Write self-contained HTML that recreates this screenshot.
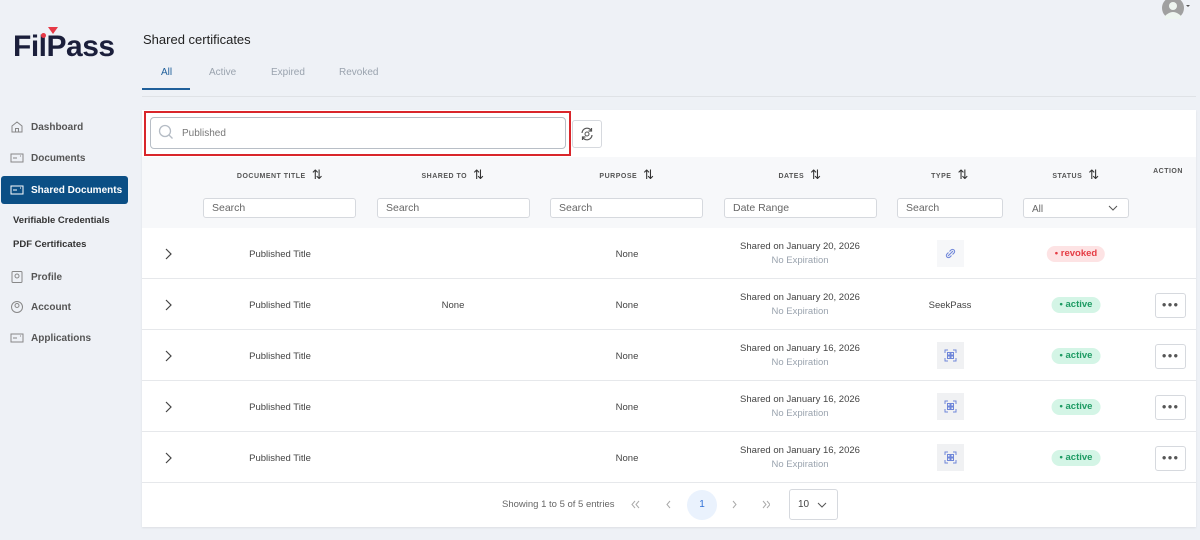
<!DOCTYPE html>
<html><head><meta charset="utf-8"><style>
*{box-sizing:border-box;margin:0;padding:0}
body{width:1200px;height:540px;background:#eef1f6;font-family:"Liberation Sans",sans-serif;position:relative;overflow:hidden;color:#333}
.abs{position:absolute}
.logo{left:13px;top:30px;font-size:30px;font-weight:bold;color:#1b1f3b;letter-spacing:-0.5px}
.nav{left:10px;font-size:10px;font-weight:bold;color:#555;display:flex;align-items:center;gap:7px}
.nav svg{width:14px;height:14px}
.active{left:1px;top:176px;width:127px;height:28px;background:#0b4f85;border-radius:3px;color:#fff}
.sub{left:13px;font-size:9.5px;font-weight:bold;color:#333}
.tabs span{position:absolute;top:67px;font-size:10px;color:#9aa3ae}
.card{left:142px;top:110px;width:1054px;height:417px;background:#fff;box-shadow:0 1px 2px rgba(0,0,0,.08)}
.hdr{left:142px;top:157px;width:1054px;height:71px;background:#f7f8fa}
.th{top:166px;font-size:7px;font-weight:bold;color:#555;letter-spacing:.5px;transform:translateX(-50%);white-space:nowrap}
.th b{font-size:13px;margin-left:6px;color:#333;font-weight:normal;position:relative;top:1px}
.in{top:198px;height:20px;border:1px solid #d6d9de;border-radius:3px;background:#fff;font-size:10.5px;color:#666;padding:3px 8px}
.row{left:142px;width:1054px;height:51px;border-bottom:1px solid #e6e8eb}
.c{position:absolute;font-size:9.5px;color:#444;transform:translateX(-50%);white-space:nowrap;text-align:center}
.d2{color:#9aa3ae;display:block;margin-top:3px}
.badge{position:absolute;transform:translateX(-50%);height:16px;border-radius:8px;font-size:9.5px;font-weight:bold;padding:2px 8px;white-space:nowrap}
.act{background:#d4f5e6;color:#1d9b63}
.rev{background:#fde3e4;color:#e53c44}
.dots{position:absolute;left:1013px;width:31px;height:25px;border:1px solid #d6d9de;border-radius:3px;text-align:center;font-size:8px;line-height:22px;color:#555;letter-spacing:1px}
.ico{position:absolute;left:795px;width:27px;height:27px;background:#f0f1f3}
.chev{position:absolute;left:22px;top:20px}
</style></head><body>
<div class="abs logo">Fil<span style="position:relative">P<span style="position:absolute;left:1px;top:-3px;width:0;height:0;border-left:5px solid transparent;border-right:5px solid transparent;border-top:7px solid #e63946"></span><span style="position:absolute;left:-6px;top:3px;width:5px;height:5px;border-radius:50%;background:#e63946"></span></span>ass</div>
<svg class="abs" style="left:1160px;top:0" width="30" height="22"><circle cx="13" cy="8" r="11" fill="#a0a0a0"/><circle cx="13" cy="6" r="4" fill="#eef5f0"/><path d="M5 16 Q13 8 21 16 L21 19 L5 19Z" fill="#eef5f0"/><path d="M26 5 l2 2 l2 -2z" fill="#555"/></svg>
<div class="abs" style="left:143px;top:32px;font-size:13px;color:#222">Shared certificates</div>
<div class="tabs"><span style="left:161px;color:#1f5f9a">All</span><span style="left:209px">Active</span><span style="left:271px">Expired</span><span style="left:339px">Revoked</span></div>
<div class="abs" style="left:142px;top:88px;width:48px;height:2px;background:#1f5f9a"></div>
<div class="abs" style="left:142px;top:96px;width:1054px;height:1px;background:#dfe2e6"></div>

<div class="abs nav" style="top:120px"><svg viewBox="0 0 14 14"><path d="M2 6 L7 2 L12 6 V12 H2Z M5.5 12 V8.5 H8.5 V12" fill="none" stroke="#888" stroke-width="1"/></svg>Dashboard</div>
<div class="abs nav" style="top:151px"><svg viewBox="0 0 14 14"><rect x="1" y="3" width="12" height="8" fill="none" stroke="#888"/><path d="M3 7h4M10 5h1" stroke="#888"/></svg>Documents</div>
<div class="abs active"></div>
<div class="abs nav" style="top:183px;color:#fff"><svg viewBox="0 0 14 14"><rect x="1" y="3" width="12" height="8" fill="none" stroke="#fff"/><path d="M3 7h4M10 5h1" stroke="#fff"/></svg>Shared Documents</div>
<div class="abs sub" style="top:215px">Verifiable Credentials</div>
<div class="abs sub" style="top:239px">PDF Certificates</div>
<div class="abs nav" style="top:270px"><svg viewBox="0 0 14 14"><rect x="2" y="1.5" width="10" height="11" rx="1" fill="none" stroke="#888"/><circle cx="7" cy="6" r="2" fill="none" stroke="#888"/></svg>Profile</div>
<div class="abs nav" style="top:300px"><svg viewBox="0 0 14 14"><circle cx="7" cy="7" r="5.5" fill="none" stroke="#888"/><circle cx="7" cy="5.5" r="2" fill="none" stroke="#888"/></svg>Account</div>
<div class="abs nav" style="top:331px"><svg viewBox="0 0 14 14"><rect x="1" y="3" width="12" height="8" fill="none" stroke="#888"/><path d="M3 7h4M10 5h1" stroke="#888"/></svg>Applications</div>

<div class="abs card"></div>
<div class="abs" style="left:144px;top:111px;width:427px;height:45px;border:2px solid #d9262b"></div>
<div class="abs" style="left:150px;top:117px;width:416px;height:32px;border:1px solid #b8bec6;border-radius:4px;background:#fff"></div>
<svg class="abs" style="left:158px;top:124px" width="16" height="16"><circle cx="7" cy="7" r="5.5" fill="none" stroke="#b5bcc5" stroke-width="1.3"/><path d="M11 11 L14.5 14.5" stroke="#b5bcc5" stroke-width="1.3"/></svg>
<div class="abs" style="left:182px;top:128px;font-size:10px;color:#777">Published</div>
<div class="abs" style="left:572px;top:120px;width:30px;height:28px;border:1px solid #d6d9de;border-radius:3px;background:#fff"></div>
<svg class="abs" style="left:579px;top:126px" width="16" height="16" viewBox="0 0 16 16"><path d="M3 7 A5 5 0 0 1 12.5 5 M13 9 A5 5 0 0 1 3.5 11" fill="none" stroke="#555" stroke-width="1.2"/><path d="M12.5 2 V5 H9.5 M3.5 14 V11 H6.5" fill="none" stroke="#555" stroke-width="1.2"/><circle cx="8" cy="8" r="2" fill="none" stroke="#555"/></svg>

<div class="abs hdr"></div>
<div class="abs th" style="left:280px">DOCUMENT TITLE<b>⇅</b></div>
<div class="abs th" style="left:453px">SHARED TO<b>⇅</b></div>
<div class="abs th" style="left:627px">PURPOSE<b>⇅</b></div>
<div class="abs th" style="left:800px">DATES<b>⇅</b></div>
<div class="abs th" style="left:950px">TYPE<b>⇅</b></div>
<div class="abs th" style="left:1076px">STATUS<b>⇅</b></div>
<div class="abs th" style="left:1168px;top:168px">ACTION</div>
<div class="abs in" style="left:203px;width:153px">Search</div>
<div class="abs in" style="left:377px;width:153px">Search</div>
<div class="abs in" style="left:550px;width:153px">Search</div>
<div class="abs in" style="left:724px;width:153px">Date Range</div>
<div class="abs in" style="left:897px;width:106px">Search</div>
<div class="abs in" style="left:1023px;width:106px;padding-top:5px;font-size:10px">All<svg style="position:absolute;right:10px;top:6px" width="10" height="6"><path d="M1 1 L5 5 L9 1" fill="none" stroke="#555"/></svg></div>

<div class="abs row" style="top:228px">
<svg class="chev" width="8" height="12"><path d="M2 1 L7 6 L2 11" fill="none" stroke="#444" stroke-width="1.2"/></svg>
<span class="c" style="left:138px;top:21px">Published Title</span>
<span class="c" style="left:485px;top:21px">None</span>
<span class="c" style="left:658px;top:13px">Shared on January 20, 2026<span class="d2">No Expiration</span></span>
<span class="ico" style="top:12px;background:#f6f7f9"><svg width="27" height="27"><path d="M11 16 l5 -5 M12.5 11.5 l1.5 -1.5 a2 2 0 0 1 3 3 l-1.5 1.5 M14.5 15.5 l-1.5 1.5 a2 2 0 0 1 -3 -3 l1.5 -1.5" fill="none" stroke="#6f86d9" stroke-width="1.1"/></svg></span>
<span class="badge rev" style="left:934px;top:18px">• revoked</span>
</div>
<div class="abs row" style="top:279px">
<svg class="chev" width="8" height="12"><path d="M2 1 L7 6 L2 11" fill="none" stroke="#444" stroke-width="1.2"/></svg>
<span class="c" style="left:138px;top:21px">Published Title</span>
<span class="c" style="left:311px;top:21px">None</span>
<span class="c" style="left:485px;top:21px">None</span>
<span class="c" style="left:658px;top:13px">Shared on January 20, 2026<span class="d2">No Expiration</span></span>
<span class="c" style="left:808px;top:21px">SeekPass</span>
<span class="badge act" style="left:934px;top:18px">• active</span>
<span class="dots" style="top:14px">●●●</span>
</div>
<div class="abs row" style="top:330px">
<svg class="chev" width="8" height="12"><path d="M2 1 L7 6 L2 11" fill="none" stroke="#444" stroke-width="1.2"/></svg>
<span class="c" style="left:138px;top:21px">Published Title</span>
<span class="c" style="left:485px;top:21px">None</span>
<span class="c" style="left:658px;top:13px">Shared on January 16, 2026<span class="d2">No Expiration</span></span>
<span class="ico" style="top:12px"><svg width="27" height="27"><path d="M8 11 V8 H11 M16 8 H19 V11 M19 16 V19 H16 M11 19 H8 V16" fill="none" stroke="#6f86d9"/><rect x="10.5" y="10.5" width="2.5" height="2.5" fill="none" stroke="#6f86d9"/><rect x="14" y="10.5" width="2.5" height="2.5" fill="none" stroke="#6f86d9"/><rect x="10.5" y="14" width="2.5" height="2.5" fill="none" stroke="#6f86d9"/><rect x="14" y="14" width="2.5" height="2.5" fill="none" stroke="#6f86d9"/></svg></span>
<span class="badge act" style="left:934px;top:18px">• active</span>
<span class="dots" style="top:14px">●●●</span>
</div>
<div class="abs row" style="top:381px">
<svg class="chev" width="8" height="12"><path d="M2 1 L7 6 L2 11" fill="none" stroke="#444" stroke-width="1.2"/></svg>
<span class="c" style="left:138px;top:21px">Published Title</span>
<span class="c" style="left:485px;top:21px">None</span>
<span class="c" style="left:658px;top:13px">Shared on January 16, 2026<span class="d2">No Expiration</span></span>
<span class="ico" style="top:12px"><svg width="27" height="27"><path d="M8 11 V8 H11 M16 8 H19 V11 M19 16 V19 H16 M11 19 H8 V16" fill="none" stroke="#6f86d9"/><rect x="10.5" y="10.5" width="2.5" height="2.5" fill="none" stroke="#6f86d9"/><rect x="14" y="10.5" width="2.5" height="2.5" fill="none" stroke="#6f86d9"/><rect x="10.5" y="14" width="2.5" height="2.5" fill="none" stroke="#6f86d9"/><rect x="14" y="14" width="2.5" height="2.5" fill="none" stroke="#6f86d9"/></svg></span>
<span class="badge act" style="left:934px;top:18px">• active</span>
<span class="dots" style="top:14px">●●●</span>
</div>
<div class="abs row" style="top:432px">
<svg class="chev" width="8" height="12"><path d="M2 1 L7 6 L2 11" fill="none" stroke="#444" stroke-width="1.2"/></svg>
<span class="c" style="left:138px;top:21px">Published Title</span>
<span class="c" style="left:485px;top:21px">None</span>
<span class="c" style="left:658px;top:13px">Shared on January 16, 2026<span class="d2">No Expiration</span></span>
<span class="ico" style="top:12px"><svg width="27" height="27"><path d="M8 11 V8 H11 M16 8 H19 V11 M19 16 V19 H16 M11 19 H8 V16" fill="none" stroke="#6f86d9"/><rect x="10.5" y="10.5" width="2.5" height="2.5" fill="none" stroke="#6f86d9"/><rect x="14" y="10.5" width="2.5" height="2.5" fill="none" stroke="#6f86d9"/><rect x="10.5" y="14" width="2.5" height="2.5" fill="none" stroke="#6f86d9"/><rect x="14" y="14" width="2.5" height="2.5" fill="none" stroke="#6f86d9"/></svg></span>
<span class="badge act" style="left:934px;top:18px">• active</span>
<span class="dots" style="top:14px">●●●</span>
</div>

<div class="abs" style="left:502px;top:499px;font-size:9.5px;color:#666">Showing 1 to 5 of 5 entries</div>
<svg class="abs" style="left:630px;top:500px" width="140" height="10"><path d="M5 1 L2 4.5 L5 8 M9 1 L6 4.5 L9 8 M40 1 L37 4.5 L40 8 M103 1 L106 4.5 L103 8 M133 1 L136 4.5 L133 8 M137 1 L140 4.5 L137 8" fill="none" stroke="#aaa"/></svg>
<div class="abs" style="left:687px;top:490px;width:30px;height:30px;border-radius:50%;background:#eaf2fd;color:#2f6fd6;font-size:10px;text-align:center;line-height:30px">1</div>
<div class="abs" style="left:789px;top:489px;width:49px;height:31px;border:1px solid #d6d9de;border-radius:3px;background:#fff;font-size:10px;color:#444;padding:9px 8px">10<svg style="position:absolute;right:10px;top:12px" width="10" height="6"><path d="M1 1 L5 5 L9 1" fill="none" stroke="#555"/></svg></div>
</body></html>
